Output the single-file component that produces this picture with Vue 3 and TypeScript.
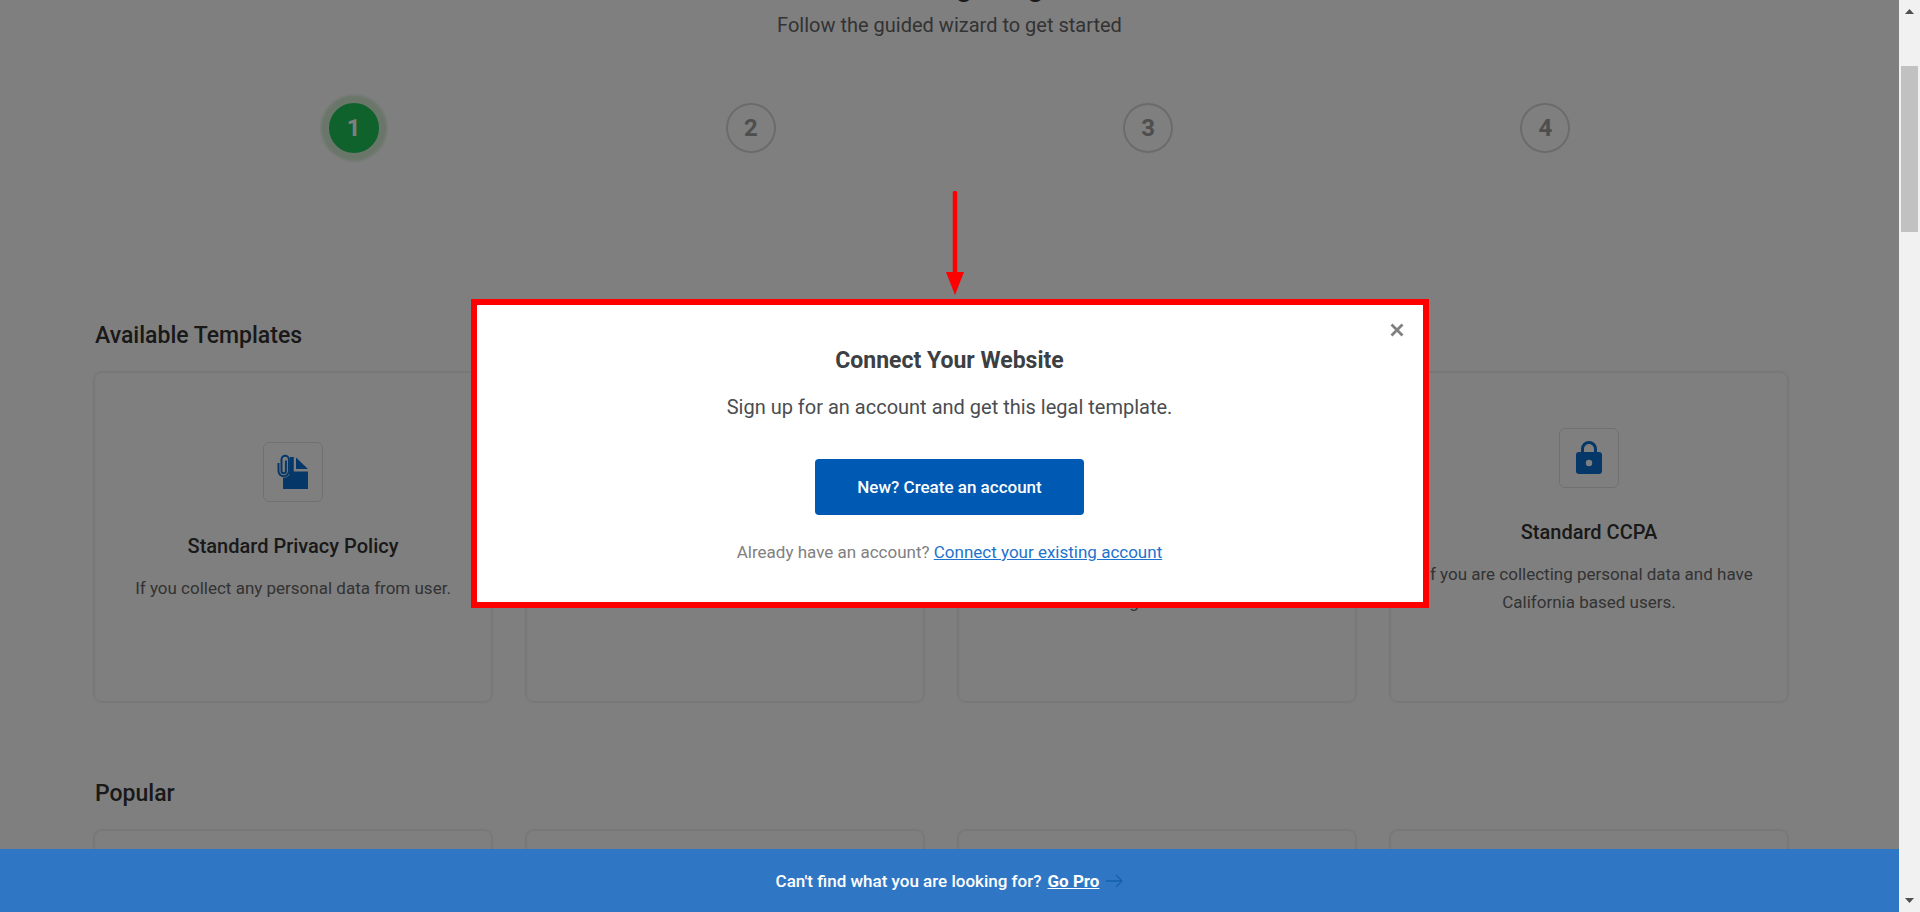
<script setup lang="ts">
interface Template {
  title: string
  lines: string[]
  icon: 'file' | 'lock'
}

const steps: number[] = [1, 2, 3, 4]
const currentStep = 1

const templates: Template[] = [
  { title: 'Standard Privacy Policy', lines: ['If you collect any personal data from user.'], icon: 'file' },
  { title: 'Terms of Use', lines: ['If you have a website.'], icon: 'file' },
  { title: 'Standard GDPR', lines: ['If you are collecting data and have', 'a large user set.'], icon: 'lock' },
  { title: 'Standard CCPA', lines: ['If you are collecting personal data and have', 'California based users.'], icon: 'lock' },
]
</script>

<template>
  <div class="window">
    <div class="viewport">
      <main class="page">
        <header class="intro">
          <h1>Welcome to WPLegalPages wizard!</h1>
          <p>Follow the guided wizard to get started</p>
        </header>

        <ol class="steps">
          <li v-for="n in steps" :key="n">
            <span class="step" :class="{ active: n === currentStep }">{{ n }}</span>
          </li>
        </ol>

        <section class="group">
          <h2>Available Templates</h2>
          <div class="cards">
            <article v-for="(t, i) in templates" :key="i" class="card">
              <span class="icon-box">
                <svg v-if="t.icon === 'file'" width="60" height="60" viewBox="0 0 60 60" aria-hidden="true">
                  <path d="M25 15H30.500V29.500H45V47H20V32L25 30Z" fill="#0b6fd0" />
                  <path d="M33 15.500L45 27H33Z" fill="#0b6fd0" />
                  <path d="M15.500 21V29a5.200 5.200 0 0 0 10.400 0V17.500a3.700 3.700 0 0 0-7.400 0V29a2.200 2.200 0 0 0 4.400 0V18.500" fill="none" stroke="#fff" stroke-width="3" />
                  <path d="M27 15H30.500V32H25L27 29Z" fill="#0b6fd0" />
                  <path d="M15.500 21V29a5.200 5.200 0 0 0 10.400 0V17.500a3.700 3.700 0 0 0-7.400 0V29a2.200 2.200 0 0 0 4.400 0V18.500" fill="none" stroke="#0b6fd0" stroke-width="2" />
                </svg>
                <svg v-else width="60" height="60" viewBox="0 0 60 60" aria-hidden="true">
                  <path d="M23.500 25V21a6.500 6.500 0 0 1 13 0V25" fill="none" stroke="#0b6fd0" stroke-width="3" />
                  <rect x="17" y="24" width="26" height="22" rx="3" fill="#0b6fd0" />
                  <circle cx="30" cy="35" r="3.200" fill="#fff" />
                </svg>
              </span>
              <h3>{{ t.title }}</h3>
              <p><span v-for="line in t.lines" :key="line">{{ line }}</span></p>
            </article>
          </div>
        </section>

        <section class="group">
          <h2>Popular</h2>
          <div class="cards">
            <article v-for="n in 4" :key="n" class="card"></article>
          </div>
        </section>
      </main>

      <div class="overlay">
        <div class="modal" role="dialog" aria-labelledby="dialog-title">
          <svg class="arrow" width="20" height="104" viewBox="0 0 20 104" aria-hidden="true">
            <path d="M10 2V84" stroke="#f00" stroke-width="4.500" stroke-linecap="round" />
            <path d="M1 81H19L10 104Z" fill="#f00" />
          </svg>
          <button class="close" type="button" aria-label="Close">
            <svg width="14" height="14" viewBox="0 0 14 14"><path d="M1.500 1.500L12.500 12.500M12.500 1.500L1.500 12.500" stroke="#808080" stroke-width="2.800" /></svg>
          </button>
          <h2 id="dialog-title">Connect Your Website</h2>
          <p class="lead">Sign up for an account and get this legal template.</p>
          <button class="primary" type="button">New? Create an account</button>
          <p class="existing">Already have an account? <a href="#connect">Connect your existing account</a></p>
        </div>
      </div>

      <footer class="promo">
        <span>Can't find what you are looking for?</span>
        <a href="#pro">Go Pro</a>
        <svg width="18" height="14" viewBox="0 0 18 14" aria-hidden="true"><path d="M1 7H17M11 1L17 7L11 13" fill="none" stroke="#1560ac" stroke-width="1.300" /></svg>
      </footer>
    </div>

    <div class="scrollbar" aria-hidden="true">
      <svg width="9" height="5" viewBox="0 0 9 5"><path d="M0 5L4.500 0L9 5Z" fill="#505050" /></svg>
      <div class="track"><div class="thumb"></div></div>
      <svg width="9" height="5" viewBox="0 0 9 5"><path d="M0 0H9L4.500 5Z" fill="#505050" /></svg>
    </div>
  </div>
</template>

<style>
body {
  margin: 0;
}
</style>

<style scoped>
.window {
  display: flex;
  height: 100vh;
  overflow: hidden;
  font-family: Roboto, "Liberation Sans", sans-serif;
}
h1, h2, h3, p, ol {
  margin: 0;
  padding: 0;
}
.viewport {
  position: relative;
  flex: 1;
  overflow: hidden;
  background: #fff;
}
.page {
  display: flex;
  flex-direction: column;
}
.intro {
  display: flex;
  flex-direction: column;
  align-items: center;
  margin-top: -33px;
}
.intro h1 {
  font-size: 28px;
  line-height: 40px;
  font-weight: 700;
  color: #333;
}
.intro p {
  margin-top: 3px;
  font-size: 20px;
  line-height: 30px;
  color: #666;
}
.steps {
  display: grid;
  grid-template-columns: repeat(4, 1fr);
  margin: 60px 155px 0;
  list-style: none;
}
.steps li {
  display: flex;
  justify-content: center;
  padding: 3px 0;
}
.step {
  box-sizing: border-box;
  width: 50px;
  height: 50px;
  border: 2px solid #d6d6d6;
  border-radius: 50%;
  font-size: 24px;
  line-height: 46px;
  font-weight: 700;
  text-align: center;
  color: #9c9c9c;
}
.step.active {
  border-color: #20c45a;
  background: #20c45a;
  color: #fff;
  box-shadow: 0 0 3px 8px #d3ecd2;
}
.group {
  padding: 0 111px 0 94px;
  margin-top: 77px;
}
.steps + .group {
  margin-top: 165px;
}
.group h2 {
  padding-left: 1px;
  font-size: 23px;
  line-height: 30px;
  font-weight: 500;
  color: #333;
}
.cards {
  display: grid;
  grid-template-columns: repeat(4, 1fr);
  gap: 34px;
  margin-top: 21px;
}
.card {
  box-sizing: border-box;
  display: flex;
  flex-direction: column;
  align-items: center;
  justify-content: center;
  height: 330px;
  padding-bottom: 30px;
  border: 1px solid #eee;
  border-radius: 8px;
  box-shadow: 0 0 3px #ddd;
  text-align: center;
}
.icon-box {
  box-sizing: border-box;
  display: flex;
  align-items: center;
  justify-content: center;
  width: 60px;
  height: 60px;
  border: 1px solid #dde2e5;
  border-radius: 6px;
}
.icon-box svg {
  flex: none;
}
.card h3 {
  margin-top: 29px;
  font-size: 20px;
  line-height: 30px;
  font-weight: 500;
  color: #333;
}
.card p {
  margin-top: 13px;
  font-size: 17px;
  line-height: 28px;
  color: #666;
}
.card p span {
  display: block;
}
.overlay {
  position: absolute;
  inset: 0;
  display: flex;
  align-items: center;
  justify-content: center;
  padding-bottom: 5px;
  background: rgba(0, 0, 0, 0.5);
}
.modal {
  position: relative;
  box-sizing: border-box;
  display: flex;
  flex-direction: column;
  align-items: center;
  width: 958px;
  padding: 41px 20px 36px;
  border: 6px solid #f00;
  background: #fff;
}
.arrow {
  position: absolute;
  bottom: calc(100% + 10px);
  left: calc(50% - 5px);
}
.close {
  position: absolute;
  top: 14px;
  right: 15px;
  display: flex;
  padding: 4px;
  border: 0;
  background: none;
}
.modal h2 {
  font-size: 23px;
  line-height: 30px;
  font-weight: 700;
  color: #3c4043;
}
.lead {
  margin-top: 16px;
  font-size: 20px;
  line-height: 30px;
  color: #4a4d50;
}
.primary {
  height: 56px;
  margin-top: 37px;
  padding: 0 42px;
  border: 0;
  border-radius: 4px;
  background: #0059b3;
  color: #fff;
  font: 500 17px/28px Roboto, "Liberation Sans", sans-serif;
}
.existing {
  margin-top: 23px;
  font-size: 17px;
  line-height: 28px;
  color: #808080;
}
.existing a {
  color: #1e73cc;
}
.promo {
  position: absolute;
  inset: auto 0 0;
  display: flex;
  align-items: center;
  justify-content: center;
  gap: 6px;
  height: 63px;
  background: #2f77c4;
  color: #fff;
  font-size: 17px;
  font-weight: 500;
}
.promo a {
  color: #fff;
  font-weight: 700;
}
.scrollbar {
  display: flex;
  flex-direction: column;
  align-items: center;
  width: 21px;
  padding: 9px 0;
  box-sizing: border-box;
  background: #f1f1f1;
}
.track {
  flex: 1;
  align-self: stretch;
  padding: 52px 2px 0;
}
.thumb {
  height: 166px;
  background: #c1c1c1;
}
</style>
